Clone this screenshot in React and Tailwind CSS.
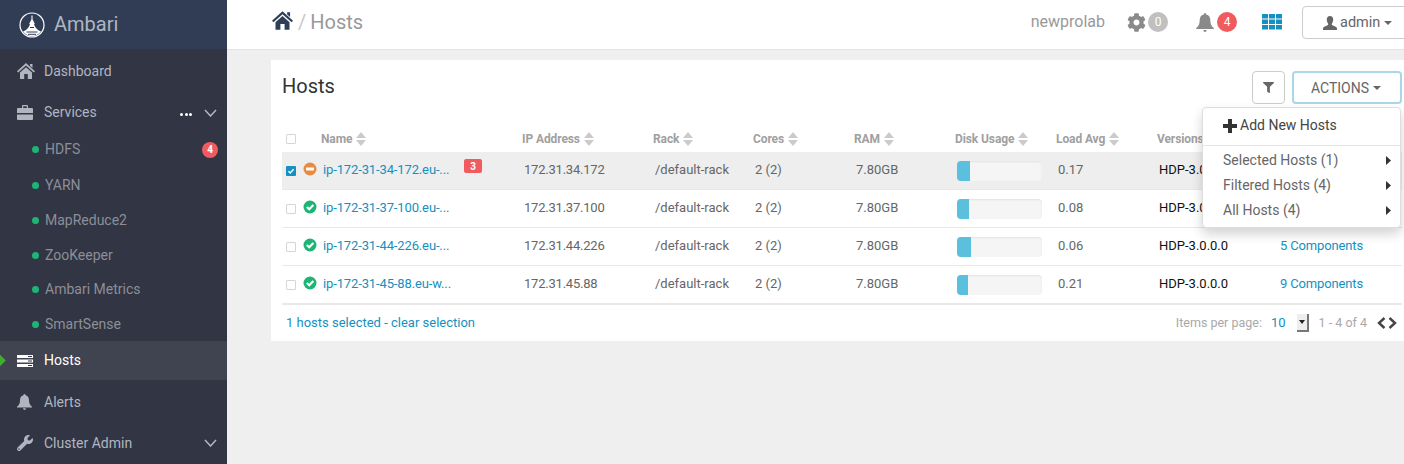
import React from "react";
import { FaCog, FaFilter, FaWrench } from "react-icons/fa";

const Home = ({ w = 18, h = 16, c = "#b0b5c0", className = "" }) => (
  <svg width={w} height={h} viewBox="0 0 18 16" fill={c} className={className}>
    <path d="M9 0 L18 8.2 L16.8 9.6 L9 2.6 L1.2 9.6 L0 8.2 Z" />
    <path d="M13 1 H15.5 V5 L13 2.8 Z" />
    <path d="M3 9.6 L9 4.2 L15 9.6 V16 H10.8 V11 H7.2 V16 H3 Z" />
  </svg>
);
const Briefcase = () => (
  <svg width="16" height="15" viewBox="0 0 16 15" fill="#b0b5c0" className="shrink-0">
    <path d="M5 3 V1 Q5 0 6 0 H10 Q11 0 11 1 V3 H9.8 V1.2 H6.2 V3 Z" />
    <path d="M0 4 Q0 3 1 3 H15 Q16 3 16 4 V8 H0 Z" />
    <path d="M0 9.5 H16 V14 Q16 15 15 15 H1 Q0 15 0 14 Z" />
  </svg>
);
const Bell = ({ w = 15, h = 16, c = "#b0b5c0", className = "" }) => (
  <svg width={w} height={h} viewBox="0 0 15 16" fill={c} className={className}>
    <path d="M7.5 0 Q8.5 0 8.6 1.3 C11 1.8 12 3.8 12 6.5 C12 9.5 13 11 15 12.8 V13.5 H0 V12.8 C2 11 3 9.5 3 6.5 C3 3.8 4 1.8 6.4 1.3 Q6.5 0 7.5 0 Z" />
    <path d="M6 14.3 H9 Q8.8 16 7.5 16 Q6.2 16 6 14.3 Z" />
  </svg>
);
const User = () => (
  <svg width="14" height="14" viewBox="0 0 14 14" fill="#666" className="mr-[3px] shrink-0">
    <path d="M7 0 C9.2 0 10.2 1.6 10.2 3.6 C10.2 5.6 9.4 7 8.8 7.8 C8.6 8.8 9.2 9.2 10.4 9.7 C12.4 10.5 14 11 14 12.5 V14 H0 V12.5 C0 11 1.6 10.5 3.6 9.7 C4.8 9.2 5.4 8.8 5.2 7.8 C4.6 7 3.8 5.6 3.8 3.6 C3.8 1.6 4.8 0 7 0 Z" />
  </svg>
);
const Plus = () => (
  <svg width="14" height="14" viewBox="0 0 14 14" fill="#333" className="mr-[3px] shrink-0">
    <path d="M5 0 H9 V5 H14 V9 H9 V14 H5 V9 H0 V5 H5 Z" />
  </svg>
);
const Sort = () => (
  <svg width="10" height="14" viewBox="0 0 10 14" className="ml-[4px] shrink-0">
    <path d="M5 0 L10 6 H0 Z" fill="#cbcbcb" />
    <path d="M0 8 H10 L5 14 Z" fill="#cbcbcb" />
  </svg>
);
const Chevron = () => (
  <svg width="13" height="8" viewBox="0 0 13 8" fill="none" stroke="#b4b8c2" strokeWidth="1.5">
    <path d="M1 1 L6.5 7 L12 1" />
  </svg>
);
const Caret = ({ c = "#666" }) => (
  <svg width="8" height="4" viewBox="0 0 8 4" className="ml-[4px] inline-block"><path d="M0 0H8L4 4Z" fill={c} /></svg>
);
const Logo = () => (
  <svg width="26" height="26" viewBox="0 0 26 26" fill="none" className="shrink-0">
    <circle cx="13" cy="13" r="12" stroke="#fff" strokeWidth="1.2" />
    <path d="M13 3.5 V9 M11 11.5 L13 7.5 L15 11.5 Z" stroke="#fff" strokeWidth="1.1" fill="#fff" />
    <path d="M4 19.5 C8 18 10 15.5 11 12 H15 C16 15.5 18 18 22 19.5 C19.5 22.5 16 24.4 13 24.4 C10 24.4 6.5 22.5 4 19.5 Z" fill="#fff" />
    <path d="M7.5 20 H18.5 M9 22.3 H17 M11 15.5 H15" stroke="#313d54" strokeWidth="1" />
  </svg>
);
const HostsIcon = () => (
  <svg width="16" height="12" viewBox="0 0 16 12" className="shrink-0">
    <path d="M0 0H16V3H0Z M0 4.5H16V7.5H0Z M0 9H16V12H0Z" fill="#fff" />
    <path d="M11 1H15V2H11Z M11 5.5H15V6.5H11Z M11 10H15V11H11Z" fill="#323544" />
  </svg>
);
const Grid = () => (
  <svg width="20" height="16" viewBox="0 0 20 16" fill="#1491c1">
    {[0, 5.5, 11].map((y) =>
      [0, 7, 14].map((x) => <rect key={`${x}-${y}`} x={x} y={y} width="6" height="4.5" />)
    )}
  </svg>
);
const Status = ({ warn }) => (
  <svg width="14" height="14" viewBox="0 0 14 14" className="shrink-0 -mt-[3px] block">
    <circle cx="7" cy="7" r="6.5" fill={warn ? "#e98a40" : "#1eb475"} />
    {warn ? (
      <rect x="3" y="5.6" width="8" height="2.8" rx="0.6" fill="#fff" />
    ) : (
      <path d="M3.8 7 L6.2 9.2 L10.4 5" stroke="#fff" strokeWidth="2.2" fill="none" />
    )}
  </svg>
);
const Box = ({ checked }) =>
  checked ? (
    <span className="flex h-[10px] w-[10px] items-center justify-center rounded-[1px] bg-[#1491c1]">
      <svg width="8" height="8" viewBox="0 0 8 8"><path d="M1.5 4.2 L3.2 6 L6.6 2.2" stroke="#fff" strokeWidth="1.5" fill="none" /></svg>
    </span>
  ) : (
    <span className="block h-[10px] w-[10px] rounded-[1px] border border-[#d5d5d5] bg-white" />
  );

const TopItem = ({ icon, label, right, h, active }) => (
  <div className={`relative flex items-center pl-[17px] pr-[10px] text-[14px] ${h} ${active ? "bg-[#404350] text-white" : "text-[#b0b5c0]"}`}>
    {active && <span className="absolute -left-[5px] top-[15px] h-[9px] w-[9px] rotate-45 bg-[#3fae2a]" />}
    <span className="flex w-[27px] shrink-0 items-center">{icon}</span>
    <span>{label}</span>
    {right}
  </div>
);
const SubItem = ({ label, badge, h }) => (
  <div className={`flex items-center pl-[32px] pr-[9px] text-[14px] text-[#8c8f97] ${h}`}>
    <span className="mr-[6px] h-[7px] w-[7px] rounded-full bg-[#1eb475]" />
    <span>{label}</span>
    {badge && (
      <span className="ml-auto flex h-[16px] w-[16px] items-center justify-center rounded-full bg-[#ef5b5e] text-[10px] font-bold text-white">{badge}</span>
    )}
  </div>
);

const cols = "grid grid-cols-[41px_201px_131px_100px_101px_101px_101px_101px_121px_1fr]";
const rows = [
  { name: "ip-172-31-34-172.eu-...", ip: "172.31.34.172", load: "0.17", pct: 13, warn: true, checked: true, alert: "3" },
  { name: "ip-172-31-37-100.eu-...", ip: "172.31.37.100", load: "0.08", pct: 12 },
  { name: "ip-172-31-44-226.eu-...", ip: "172.31.44.226", load: "0.06", pct: 14, comp: "5 Components" },
  { name: "ip-172-31-45-88.eu-w...", ip: "172.31.45.88", load: "0.21", pct: 11, comp: "9 Components" },
];
const heads = ["Name", "IP Address", "Rack", "Cores", "RAM", "Disk Usage", "Load Avg"];

export default function App() {
  return (
    <div className="flex h-[464px] w-[1404px] overflow-hidden bg-[#efefef] font-['Roboto',sans-serif]">
      <aside className="w-[227px] shrink-0 bg-[#323544]">
        <div className="flex h-[49px] items-center bg-[#313d54] pl-[19px]">
          <Logo />
          <span className="mb-[1px] ml-[9px] text-[20px] text-[#b0b5c0]">Ambari</span>
        </div>
        <TopItem h="h-[44px]" icon={<Home />} label="Dashboard" />
        <TopItem
          h="h-[39px]"
          icon={<Briefcase />}
          label="Services"
          right={
            <span className="ml-auto flex items-center">
              <span className="mr-[12px] mt-[3px] flex gap-[1.5px]">
                <i className="h-[3px] w-[3px] rounded-full bg-white" /><i className="h-[3px] w-[3px] rounded-full bg-white" /><i className="h-[3px] w-[3px] rounded-full bg-white" />
              </span>
              <Chevron />
            </span>
          }
        />
        <SubItem h="h-[35px]" label="HDFS" badge="4" />
        <SubItem h="h-[36px]" label="YARN" />
        <SubItem h="h-[35px]" label="MapReduce2" />
        <SubItem h="h-[34px]" label="ZooKeeper" />
        <SubItem h="h-[34px]" label="Ambari Metrics" />
        <SubItem h="h-[35px] pt-[1px]" label="SmartSense" />
        <TopItem h="h-[39px]" active icon={<HostsIcon />} label="Hosts" />
        <TopItem h="h-[44px]" icon={<Bell />} label="Alerts" />
        <TopItem h="h-[40px] pb-[2px]" icon={<FaWrench size={16} color="#b0b5c0" />} label="Cluster Admin" right={<span className="ml-auto"><Chevron /></span>} />
      </aside>

      <main className="min-w-0 flex-1">
        <header className="flex h-[50px] items-center border-b border-[#e3e3e3] bg-white pb-[5px] pl-[45px]">
          <Home w={21} h={19} c="#2e3d58" className="-mt-[3px]" />
          <span className="ml-[5px] text-[20px] text-[#c8c8c8]">/</span>
          <span className="ml-[4px] text-[20px] text-[#999]">Hosts</span>
          <span className="ml-auto text-[16px] text-[#999]">newprolab</span>
          <FaCog size={19} color="#8a8a8a" className="ml-[22px]" />
          <span className="ml-[2px] flex h-[20px] w-[20px] items-center justify-center rounded-full bg-[#c0c0c0] text-[12px] text-white">0</span>
          <Bell w={18} h={19} c="#8a8a8a" className="ml-[28px]" />
          <span className="ml-[3px] flex h-[20px] w-[20px] items-center justify-center rounded-full bg-[#ef5b5e] text-[12px] text-white">4</span>
          <span className="ml-[25px] flex"><Grid /></span>
          <span className="ml-[20px] -mr-[4px] flex h-[33px] w-[106px] items-center rounded-[4px] border border-[#ccc] pl-[20px] pt-[1px] text-[14.5px] text-[#666]">
            <User />admin<Caret />
          </span>
        </header>

        <section className="relative ml-[44px] mt-[10px] h-[281px] bg-white pl-[11px] pr-[2px]">
          <div className="flex h-[65px] items-start pt-[11px]">
            <h1 className="mt-[3px] text-[20px] font-normal leading-[24px] text-[#333]">Hosts</h1>
            <button className="ml-auto flex h-[33px] w-[33px] items-center justify-center rounded-[4px] border border-[#ccc] bg-white">
              <FaFilter size={11} color="#666" />
            </button>
            <button className="ml-[7px] flex h-[33px] w-[110px] items-center justify-center rounded-[4px] border-2 border-[#a9d7ea] bg-white pr-[2px] pt-[1px] text-[14px] text-[#666]">
              ACTIONS<Caret />
            </button>
          </div>

          <div className={`${cols} h-[27px] items-center text-[12px] font-bold tracking-[-0.1px] text-[#a0a0a0]`}>
            <span className="pl-[4px]"><Box /></span>
            {heads.map((h) => (
              <span key={h} className="-ml-[2px] flex items-center">{h}<Sort /></span>
            ))}
            <span className="-ml-[2px]">Versions</span>
          </div>

          {rows.map((r) => (
            <div key={r.ip} className={`${cols} h-[38px] items-center border-b border-[#e8e8e8] text-[13px] text-[#666] ${r.checked ? "bg-[#eeeeee]" : ""}`}>
              <span className="flex items-center pl-[4px]">
                <Box checked={r.checked} />
                <span className="ml-[7px]"><Status warn={r.warn} /></span>
              </span>
              <span className="relative mb-[1px] tracking-[-0.13px] text-[#1491c1]">
                {r.name}
                {r.alert && (
                  <span className="absolute left-[141px] -top-[1px] flex h-[14px] w-[18px] items-center justify-center rounded-[2px] bg-[#ef5b5e] text-[10px] font-bold tracking-normal text-white">{r.alert}</span>
                )}
              </span>
              <span className="mb-[1px] tracking-[-0.22px]">{r.ip}</span>
              <span className="mb-[1px]">/default-rack</span>
              <span className="mb-[1px]">2 (2)</span>
              <span className="mb-[1px]">7.80GB</span>
              <span className="pr-[16px]">
                <span className="block h-[20px] w-[85px] overflow-hidden rounded-[4px] bg-[#f5f5f5] shadow-[inset_0_1px_2px_rgba(0,0,0,0.08)]">
                  <span className="block h-full bg-[#5bc0de]" style={{ width: r.pct }} />
                </span>
              </span>
              <span className="mb-[1px]">{r.load}</span>
              <span className="mb-[1px] text-[#111]">HDP-3.0.0.0</span>
              {r.comp && <span className="mb-[1px] whitespace-nowrap tracking-[-0.15px] text-[#1491c1]">{r.comp}</span>}
            </div>
          ))}
          <div className="h-[1px] bg-[#e8e8e8]" />

          <div className="flex h-[36px] items-center pl-[4px] text-[13px] text-[#1491c1]">
            <span>1 hosts selected - clear selection</span>
            <span className="ml-auto text-[12.5px] text-[#a8a8a8]">Items per page:</span>
            <span className="ml-[9px]">10</span>
            <span className="ml-[11px] flex h-[18px] w-[12px] items-center justify-center border-r-2 border-b-2 border-[#777] bg-[#eee]">
              <svg width="6" height="4" viewBox="0 0 6 4"><path d="M0 0H6L3 4Z" fill="#222" /></svg>
            </span>
            <span className="ml-[10px] text-[12.5px] text-[#a8a8a8]">1 - 4 of 4</span>
            <span className="ml-[10px] mr-[5px] flex gap-[2px]">
              <svg width="9" height="12" viewBox="0 0 9 12" fill="none" stroke="#444" strokeWidth="2.4"><path d="M7.5 1 L2 6 L7.5 11" /></svg>
              <svg width="9" height="12" viewBox="0 0 9 12" fill="none" stroke="#444" strokeWidth="2.4"><path d="M1.5 1 L7 6 L1.5 11" /></svg>
            </span>
          </div>

          <div className="absolute right-[3px] top-[47px] h-[121px] w-[199px] rounded-[4px] border border-[#ddd] bg-white text-[14px] text-[#666] shadow-[0_6px_12px_rgba(0,0,0,0.175)]">
            <div className="flex h-[38px] items-center border-b border-[#e5e5e5] pb-[2px] pl-[20px] text-[#444]">
              <Plus />Add New Hosts
            </div>
            <div className="pt-[2px]">
              {["Selected Hosts (1)", "Filtered Hosts (4)", "All Hosts (4)"].map((t) => (
                <div key={t} className="flex h-[25px] items-center pl-[20px] pr-[9px]">
                  {t}
                  <svg width="5" height="9" viewBox="0 0 5 9" className="ml-auto"><path d="M0 0L5 4.5L0 9Z" fill="#333" /></svg>
                </div>
              ))}
            </div>
          </div>
        </section>
      </main>
    </div>
  );
}
